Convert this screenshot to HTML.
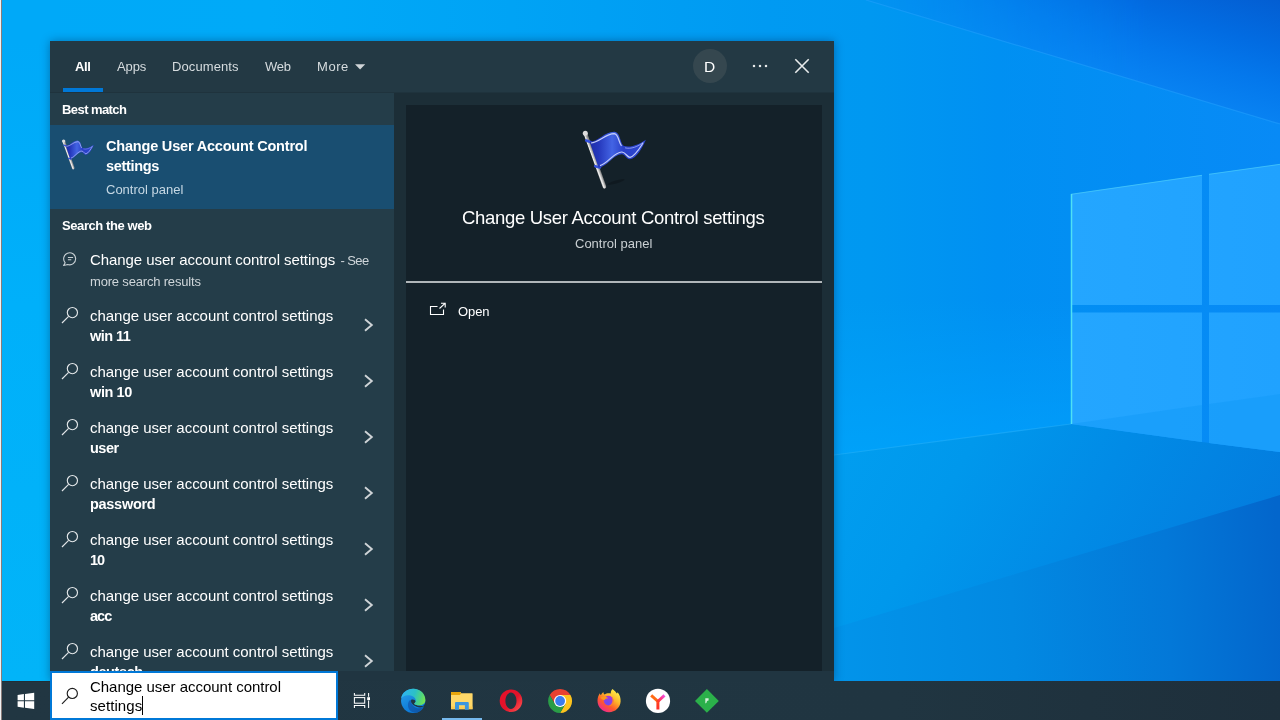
<!DOCTYPE html>
<html lang="en">
<head>
<meta charset="utf-8">
<title>Search</title>
<style>
*{box-sizing:border-box;margin:0;padding:0}
html,body{width:1280px;height:720px;overflow:hidden;background:#00a6f6}
body{font-family:"Liberation Sans","DejaVu Sans",sans-serif;color:#fff;position:relative}
#wall{position:absolute;left:0;top:0;width:1280px;height:720px}
#edge{position:absolute;left:0;top:0;width:2px;height:720px;background:linear-gradient(90deg,#f0f2f4 0,#f0f2f4 1px,#8a7c7a 1px,#8a7c7a 2px)}
#panel{position:absolute;left:50px;top:41px;width:784px;height:640px;background:#1c2e37;box-shadow:0 0 9px rgba(0,30,70,.4)}
#hdr{position:absolute;left:50px;top:41px;width:784px;height:52px;background:#233944;border-bottom:1px solid #1f333d}
#list{position:absolute;left:50px;top:93px;width:344px;height:588px;background:#243d49}
#sel{position:absolute;left:50px;top:125px;width:344px;height:84px;background:#194e71}
#tabline{position:absolute;left:63px;top:88px;width:40px;height:4px;background:#0078d7}
#card{position:absolute;left:406px;top:105px;width:416px;height:566px;background:#142129}
#divider{position:absolute;left:406px;top:281px;width:416px;height:2px;background:#b0b6b9}
#avatar{position:absolute;left:693px;top:49px;width:34px;height:34px;border-radius:50%;background:#35474f}
.t{position:absolute;white-space:nowrap;will-change:transform}
.i{position:absolute;overflow:visible}
#task{position:absolute;left:2px;top:681px;width:1278px;height:39px;background:linear-gradient(90deg,#213642 0,#203541 70%,#1e2f3b 100%)}
#tl{position:absolute;left:2px;top:681px;width:48px;height:1px;background:#212f37}
#pbot{position:absolute;left:50px;top:671px;width:784px;height:10px;background:#203541}
#sbox{position:absolute;left:50px;top:671px;width:288px;height:49px;background:#fff;border:2px solid #0078d7}
#caret{position:absolute;left:142px;top:696px;width:1px;height:19px;background:#000}
#run{position:absolute;left:442px;top:718px;width:40px;height:2px;background:#76b9ed}
</style>
</head>
<body>
<svg id="wall" viewBox="0 0 1280 720">
<defs>
<linearGradient id="gbase" gradientUnits="userSpaceOnUse" x1="0" y1="0" x2="1280" y2="0"><stop offset="0" stop-color="#00a9f8"/><stop offset="0.21" stop-color="#00aaf8"/><stop offset="0.4" stop-color="#00a3f5"/><stop offset="0.6" stop-color="#009af2"/><stop offset="0.68" stop-color="#0098f1"/><stop offset="0.78" stop-color="#0090f2"/><stop offset="1" stop-color="#088af6"/></linearGradient>
<linearGradient id="gwedge" gradientUnits="userSpaceOnUse" x1="1246" y1="114" x2="1280" y2="0"><stop offset="0" stop-color="#0882f2"/><stop offset="0.3" stop-color="#0478ec"/><stop offset="0.6" stop-color="#026ce2"/><stop offset="1" stop-color="#035ed2"/></linearGradient>
<linearGradient id="gfloor" gradientUnits="userSpaceOnUse" x1="834" y1="440" x2="1280" y2="690"><stop offset="0" stop-color="#019ef0"/><stop offset="0.24" stop-color="#0098ec"/><stop offset="0.5" stop-color="#018be6"/><stop offset="1" stop-color="#0474da"/></linearGradient>
<linearGradient id="gfloor2" gradientUnits="userSpaceOnUse" x1="834" y1="620" x2="1280" y2="600"><stop offset="0" stop-color="#0294ea"/><stop offset="0.4" stop-color="#0289e2"/><stop offset="0.75" stop-color="#0378d8"/><stop offset="1" stop-color="#0366cc"/></linearGradient>
<linearGradient id="gpane" gradientUnits="userSpaceOnUse" x1="1071" y1="0" x2="1280" y2="0"><stop offset="0" stop-color="#24a6ff"/><stop offset="1" stop-color="#20a2ff"/></linearGradient>
<linearGradient id="gglow" gradientUnits="userSpaceOnUse" x1="0" y1="300" x2="0" y2="450"><stop offset="0" stop-color="#00a8ff" stop-opacity="0"/><stop offset="1" stop-color="#00a8ff" stop-opacity=".55"/></linearGradient>
<linearGradient id="gwm" gradientUnits="userSpaceOnUse" x1="866" y1="0" x2="1150" y2="0"><stop offset="0" stop-color="#fff" stop-opacity=".15"/><stop offset="1" stop-color="#fff" stop-opacity="1"/></linearGradient>
<mask id="wm" maskUnits="userSpaceOnUse" x="860" y="0" width="420" height="130"><rect x="860" y="0" width="420" height="130" fill="url(#gwm)"/></mask>
<linearGradient id="gleft" gradientUnits="userSpaceOnUse" x1="0" y1="0" x2="0" y2="681"><stop offset="0" stop-color="#00a9f8"/><stop offset="0.06" stop-color="#00a9f8"/><stop offset="0.45" stop-color="#00b0fa"/><stop offset="1" stop-color="#02b4f8"/></linearGradient>
</defs>
<rect width="1280" height="720" fill="url(#gbase)"/>
<rect x="0" y="0" width="60" height="700" fill="url(#gleft)"/>
<polygon points="866,0 1280,124 1280,0" fill="url(#gwedge)" mask="url(#wm)"/>
<path d="M866 0L1280 124" stroke="#2aa4ff" stroke-width="1.200" opacity=".45" fill="none"/>
<polygon points="700,300 1071,300 1071,424 834,455 700,472" fill="url(#gglow)"/>
<polygon points="834,455 1071,424 1202,442 1280,452 1280,700 834,700" fill="url(#gfloor)"/>
<polygon points="834,628 1280,495 1280,700 834,700" fill="url(#gfloor2)"/>
<path d="M834 455L1071 424" stroke="#3cc0ff" stroke-width="1.200" opacity=".35" fill="none"/>
<polygon points="1071,194 1202,175 1202,305 1071,305" fill="url(#gpane)"/>
<polygon points="1209,174 1280,164 1280,305 1209,305" fill="url(#gpane)"/>
<polygon points="1071,312.500 1202,312.500 1202,442 1071,424" fill="url(#gpane)"/>
<polygon points="1209,312.500 1280,312.500 1280,452 1209,443" fill="url(#gpane)"/>
<polygon points="1071,424 1202,405 1202,442" fill="#149af8" opacity=".55"/>
<polygon points="1209,404 1280,394 1280,452 1209,443" fill="#149af8" opacity=".55"/>
<path d="M1071.500 194V424" stroke="#4fe0f4" stroke-width="1.500" fill="none"/>
<path d="M1071 194.300L1202 175.300M1209 174.300L1280 164.300" stroke="#58d8f8" stroke-width="1" opacity=".55" fill="none"/>
</svg>

<div id="edge"></div>
<div id="panel"></div>
<div id="hdr"></div>
<div id="list"></div>
<div id="sel"></div>
<div id="tabline"></div>
<div id="card"></div>
<div id="divider"></div>
<div id="avatar"></div>
<div id="pbot"></div>
<div class="t" style="left:75.00px;top:57.40px;font-size:13px;line-height:20px;color:#fff;font-weight:700;letter-spacing:-0.34px;">All</div>
<div class="t" style="left:116.90px;top:57.40px;font-size:13px;line-height:20px;color:#d6dcdf;letter-spacing:-0.11px;">Apps</div>
<div class="t" style="left:172.20px;top:57.40px;font-size:13px;line-height:20px;color:#d6dcdf;letter-spacing:0.1px;">Documents</div>
<div class="t" style="left:265.20px;top:57.40px;font-size:13px;line-height:20px;color:#d6dcdf;letter-spacing:-0.2px;">Web</div>
<div class="t" style="left:317.00px;top:57.40px;font-size:13px;line-height:20px;color:#d6dcdf;letter-spacing:0.55px;">More</div>
<div class="t" style="left:704.30px;top:56.83px;font-size:15.5px;line-height:20px;color:#fff;">D</div>
<div class="t" style="left:61.50px;top:100.20px;font-size:13px;line-height:20px;color:#fff;font-weight:700;letter-spacing:-0.57px;">Best match</div>
<div class="t" style="left:105.60px;top:135.78px;font-size:14.5px;line-height:20px;color:#fff;font-weight:700;letter-spacing:-0.19px;">Change User Account Control</div>
<div class="t" style="left:105.60px;top:155.78px;font-size:14.5px;line-height:20px;color:#fff;font-weight:700;letter-spacing:-0.32px;">settings</div>
<div class="t" style="left:105.50px;top:180.15px;font-size:13px;line-height:20px;color:#c6d8e4;">Control panel</div>
<div class="t" style="left:61.50px;top:216.20px;font-size:13px;line-height:20px;color:#fff;font-weight:700;letter-spacing:-0.41px;">Search the web</div>
<div class="t" style="left:89.50px;top:249.60px;font-size:15px;line-height:20px;color:#fff;letter-spacing:-0.07px;">Change user account control settings<span style="font-size:13px;color:#cfd6da;letter-spacing:-0.6px;margin-left:2.3px"> - See</span></div>
<div class="t" style="left:89.50px;top:272.00px;font-size:13px;line-height:20px;color:#cfd6da;letter-spacing:-0.18px;">more search results</div>
<div class="t" style="left:89.50px;top:305.60px;font-size:15px;line-height:20px;color:#fff;letter-spacing:-0.03px;">change user account control settings</div>
<div class="t" style="left:89.60px;top:325.78px;font-size:14.5px;line-height:20px;color:#fff;font-weight:700;letter-spacing:-0.55px;">win 11</div>
<div class="t" style="left:89.50px;top:361.60px;font-size:15px;line-height:20px;color:#fff;letter-spacing:-0.03px;">change user account control settings</div>
<div class="t" style="left:89.60px;top:381.78px;font-size:14.5px;line-height:20px;color:#fff;font-weight:700;letter-spacing:-0.4px;">win 10</div>
<div class="t" style="left:89.50px;top:417.60px;font-size:15px;line-height:20px;color:#fff;letter-spacing:-0.03px;">change user account control settings</div>
<div class="t" style="left:89.60px;top:437.78px;font-size:14.5px;line-height:20px;color:#fff;font-weight:700;letter-spacing:-0.5px;">user</div>
<div class="t" style="left:89.50px;top:473.60px;font-size:15px;line-height:20px;color:#fff;letter-spacing:-0.03px;">change user account control settings</div>
<div class="t" style="left:89.60px;top:493.78px;font-size:14.5px;line-height:20px;color:#fff;font-weight:700;letter-spacing:-0.29px;">password</div>
<div class="t" style="left:89.50px;top:529.60px;font-size:15px;line-height:20px;color:#fff;letter-spacing:-0.03px;">change user account control settings</div>
<div class="t" style="left:89.60px;top:549.78px;font-size:14.5px;line-height:20px;color:#fff;font-weight:700;letter-spacing:-1.0px;">10</div>
<div class="t" style="left:89.50px;top:585.60px;font-size:15px;line-height:20px;color:#fff;letter-spacing:-0.03px;">change user account control settings</div>
<div class="t" style="left:89.60px;top:605.78px;font-size:14.5px;line-height:20px;color:#fff;font-weight:700;letter-spacing:-1.0px;">acc</div>
<div class="t" style="left:89.50px;top:641.60px;font-size:15px;line-height:20px;color:#fff;letter-spacing:-0.03px;">change user account control settings</div>
<div class="t" style="left:89.60px;top:661.78px;font-size:14.5px;line-height:20px;color:#fff;font-weight:700;letter-spacing:-0.4px;">deutsch</div>
<div class="t" style="left:462.00px;top:205.59px;font-size:18.5px;line-height:24px;color:#fff;letter-spacing:-0.31px;">Change User Account Control settings</div>
<div class="t" style="left:574.50px;top:234.15px;font-size:13px;line-height:20px;color:#c9cfd2;">Control panel</div>
<div class="t" style="left:457.50px;top:302.00px;font-size:13px;line-height:20px;color:#fff;letter-spacing:-0.1px;">Open</div>
<svg class="i" style="left:0;top:0" width="1280" height="720" viewBox="0 0 1280 720">
<defs><linearGradient id="fg" x1="0" y1="0" x2="1" y2="0"><stop offset="0" stop-color="#1e2ea8"/><stop offset="0.16" stop-color="#2538bc"/><stop offset="0.4" stop-color="#4364e4"/><stop offset="0.6" stop-color="#2a40c8"/><stop offset="1" stop-color="#2e48d4"/></linearGradient>
<linearGradient id="pg" gradientUnits="userSpaceOnUse" x1="22" y1="41" x2="26" y2="39.500"><stop offset="0" stop-color="#6e6e6e"/><stop offset="0.45" stop-color="#f2f2f2"/><stop offset="1" stop-color="#8a8a8a"/></linearGradient>
<g id="flagshadow"><ellipse cx="46" cy="62" rx="9" ry="1.600" fill="#000" opacity=".22" transform="rotate(-16 46 62)"/></g>
<g id="pole1"><path d="M15.300 13.300L34.400 66.700" stroke="url(#pg)" stroke-width="3.600" stroke-linecap="round" fill="none"/>
<circle cx="15.300" cy="13.200" r="2.500" fill="#dcdcdc"/></g>
<linearGradient id="pg2" gradientUnits="userSpaceOnUse" x1="21.300" y1="41.300" x2="26.700" y2="39.300"><stop offset="0" stop-color="#6e6e6e"/><stop offset="0.45" stop-color="#f2f2f2"/><stop offset="1" stop-color="#8a8a8a"/></linearGradient>
<g id="pole2"><path d="M15.600 14L34.600 67.500" stroke="url(#pg2)" stroke-width="5.400" stroke-linecap="round" fill="none"/>
<circle cx="15.500" cy="13.600" r="3.300" fill="#dcdcdc"/></g>
<g id="cloth">
<path d="M16.200 20.600L21 22.200M25.200 46.200L30 47.500" stroke="#3450dc" stroke-width="2.600" stroke-linecap="round"/>
<path d="M19.600 21.800C28 21.500 35 11.500 44.400 11.700C51 12.500 50 24.500 54.400 26.100C61 28 70 24 75.900 19.800C72 28 67 38.500 60 39.200C56.500 39.500 55.500 35 52.200 34.300C44 33.500 37 47 28.600 47.800Z" fill="url(#fg)"/>
<path d="M21 23C29 22.500 35.500 13.800 44.200 13.700C48.500 14 48.500 22 51.500 26" stroke="#d4dcff" stroke-width="1.200" fill="none" opacity=".9"/>
<path d="M30 45.600C38 43.500 44.500 31.500 52 32C56 32.500 57 37.300 60 37.300C65 36.300 69.500 28.500 73 23" stroke="#d4dcff" stroke-width="1.200" fill="none" opacity=".9"/>
<path d="M55 27.800C61 29.500 68 26.500 73.500 22.300" stroke="#b4c0ff" stroke-width=".9" fill="none" opacity=".75"/>
</g></defs>
<g transform="translate(570 120)"><use href="#flagshadow"/><use href="#pole1"/><use href="#cloth"/></g>
<g transform="translate(55.900 134.300) scale(.5)"><use href="#pole2"/><use href="#cloth" transform="translate(0 .6) scale(1 1.030)"/></g>
<path d="M355 64.200H365.200L360.100 69.500Z" fill="#d0d5d8"/>
<rect x="752.9" y="64.900" width="2.200" height="2.200" fill="#e6e9ea"/>
<rect x="758.9" y="64.900" width="2.200" height="2.200" fill="#e6e9ea"/>
<rect x="764.9" y="64.900" width="2.200" height="2.200" fill="#e6e9ea"/>
<path d="M795.300 59.300L808.700 72.700M808.700 59.300L795.300 72.700" stroke="#e8ebec" stroke-width="1.600" fill="none"/>
<g stroke="#c9d1d5" stroke-width="1.100" fill="none" transform="translate(.6 0)"><path d="M64.600 262.800A6 6 0 1 1 67.200 264.500L63 265.500Z" stroke-linejoin="round"/><path d="M67.300 257.500H72.500M67.300 259.800H70.700"/></g>
<g stroke="#e3e7e9" stroke-width="1.150" fill="none" transform="translate(0 0)"><circle cx="72.400" cy="312.600" r="5.100"/><path d="M68.600 316.400L62 323"/></g>
<path d="M365 319.3L371.800 325.0L365 330.7" stroke="#cfd4d7" stroke-width="1.900" fill="none"/>
<g stroke="#e3e7e9" stroke-width="1.150" fill="none" transform="translate(0 56)"><circle cx="72.400" cy="312.600" r="5.100"/><path d="M68.600 316.400L62 323"/></g>
<path d="M365 375.3L371.800 381.0L365 386.7" stroke="#cfd4d7" stroke-width="1.900" fill="none"/>
<g stroke="#e3e7e9" stroke-width="1.150" fill="none" transform="translate(0 112)"><circle cx="72.400" cy="312.600" r="5.100"/><path d="M68.600 316.400L62 323"/></g>
<path d="M365 431.3L371.800 437.0L365 442.7" stroke="#cfd4d7" stroke-width="1.900" fill="none"/>
<g stroke="#e3e7e9" stroke-width="1.150" fill="none" transform="translate(0 168)"><circle cx="72.400" cy="312.600" r="5.100"/><path d="M68.600 316.400L62 323"/></g>
<path d="M365 487.3L371.800 493.0L365 498.7" stroke="#cfd4d7" stroke-width="1.900" fill="none"/>
<g stroke="#e3e7e9" stroke-width="1.150" fill="none" transform="translate(0 224)"><circle cx="72.400" cy="312.600" r="5.100"/><path d="M68.600 316.400L62 323"/></g>
<path d="M365 543.3L371.800 549.0L365 554.7" stroke="#cfd4d7" stroke-width="1.900" fill="none"/>
<g stroke="#e3e7e9" stroke-width="1.150" fill="none" transform="translate(0 280)"><circle cx="72.400" cy="312.600" r="5.100"/><path d="M68.600 316.400L62 323"/></g>
<path d="M365 599.3L371.800 605.0L365 610.7" stroke="#cfd4d7" stroke-width="1.900" fill="none"/>
<g stroke="#e3e7e9" stroke-width="1.150" fill="none" transform="translate(0 336)"><circle cx="72.400" cy="312.600" r="5.100"/><path d="M68.600 316.400L62 323"/></g>
<path d="M365 655.3L371.800 661.0L365 666.7" stroke="#cfd4d7" stroke-width="1.900" fill="none"/>
<g stroke="#fff" stroke-width="1.100" fill="none"><path d="M437.500 306.500H430.500V314.500H443.500V309.500"/><path d="M439.500 308.500L445 303.300M441 303.300H445.200V307.500"/></g>
</svg>

<div id="task"></div>
<div id="tl"></div>
<div id="sbox"></div>
<svg class="i" style="left:0;top:0" width="1280" height="720" viewBox="0 0 1280 720">
<defs>
<linearGradient id="eg1" gradientUnits="userSpaceOnUse" x1="200" y1="230" x2="420" y2="620"><stop offset="0" stop-color="#2499e6"/><stop offset="0.5" stop-color="#1585dc"/><stop offset="1" stop-color="#0a78da"/></linearGradient>
<linearGradient id="eg2" gradientUnits="userSpaceOnUse" x1="190" y1="200" x2="680" y2="360"><stop offset="0" stop-color="#2eb4f2"/><stop offset="0.5" stop-color="#2cc0c6"/><stop offset="0.8" stop-color="#52d67a"/><stop offset="1" stop-color="#7be44e"/></linearGradient>
<linearGradient id="eg3" gradientUnits="userSpaceOnUse" x1="340" y1="380" x2="560" y2="600"><stop offset="0" stop-color="#1264bc"/><stop offset="1" stop-color="#0c58aa"/></linearGradient>
<linearGradient id="og" gradientUnits="userSpaceOnUse" x1="501" y1="692" x2="521" y2="710"><stop offset="0" stop-color="#e8102a"/><stop offset="0.55" stop-color="#e0142a"/><stop offset="1" stop-color="#ff5050"/></linearGradient>
<linearGradient id="fxg" gradientUnits="userSpaceOnUse" x1="617" y1="691" x2="602" y2="712"><stop offset="0" stop-color="#fff04a"/><stop offset="0.35" stop-color="#ffb52a"/><stop offset="0.65" stop-color="#ff5a2a"/><stop offset="1" stop-color="#ee1fa0"/></linearGradient>
<radialGradient id="fxp" gradientUnits="userSpaceOnUse" cx="607.500" cy="703" r="6.500"><stop offset="0" stop-color="#6a4cf0"/><stop offset="1" stop-color="#a838d8"/></radialGradient>
<linearGradient id="yg" gradientUnits="userSpaceOnUse" x1="657.900" y1="701" x2="664.500" y2="695.300"><stop offset="0" stop-color="#ff3a2a"/><stop offset="0.5" stop-color="#ff3a8a"/><stop offset="1" stop-color="#f050e8"/></linearGradient>
<linearGradient id="yg2" gradientUnits="userSpaceOnUse" x1="657.900" y1="700" x2="657.900" y2="709.500"><stop offset="0" stop-color="#ff4a1a"/><stop offset="1" stop-color="#ff2a2a"/></linearGradient>
<clipPath id="cc"><circle cx="560.100" cy="701" r="12"/></clipPath>
</defs>
<g fill="#fff"><path d="M17.600 695L23.900 694.100V700.200H17.600Z"/><path d="M25 693.950L34.200 692.700V700.200H25Z"/><path d="M17.600 701.300H23.900V707.700L17.600 706.800Z"/><path d="M25 701.300H34.200V709.100L25 707.850Z"/></g>
<g stroke="#1e1e1e" stroke-width="1.150" fill="none"><circle cx="72.300" cy="693.400" r="5.100"/><path d="M68.600 697.200L62 703.800"/></g>
<g stroke="#fff" stroke-width="1.050" fill="none"><rect x="354.400" y="697.600" width="10.300" height="5.600"/><path d="M354.400 692.900V695.300H364.700V692.900"/><path d="M354.400 707.900V705.500H364.700V707.900"/><path d="M368.600 692.900V696.800M368.600 700.500V707.900"/></g><rect x="367.200" y="697.200" width="2.800" height="2.900" fill="#fff"/>
<g transform="translate(393 684) scale(0.047214)"><circle cx="427" cy="357" r="257" fill="url(#eg1)"/><path d="M330 380C295 450 325 560 420 600C520 632 625 565 648 478C600 522 520 530 450 480C400 440 380 400 385 338C352 338 336 358 330 380Z" fill="url(#eg3)"/><path d="M385 335C420 318 472 330 482 370C474 398 452 408 446 420C470 450 560 470 645 468C622 502 560 502 500 482C420 452 368 402 385 335Z" fill="#203541"/><path d="M640 462L700 410L700 560C680 540 660 500 648 480Z" fill="#203541"/><path d="M172 305C188 182 300 100 430 100C580 100 686 210 686 340C686 420 620 452 560 452C500 452 450 432 448 412C470 392 492 372 482 340C470 280 400 240 320 240C250 240 198 272 172 305Z" fill="url(#eg2)"/></g>
<g><path d="M451 692.500Q451 692 451.500 692H460.300L461.300 693.200H472.100Q472.600 693.200 472.600 693.700V709.200H451Z" fill="#ffd868"/><path d="M451 692.500Q451 692 451.500 692H460.300L461.300 693.200L459.800 694.900H451Z" fill="#e8a60c"/><path d="M451 706.500H472.600V709.200H451Z" fill="#fbc84a" opacity=".7"/><path d="M455 709.700V702.900Q455 701.900 456 701.900H467.800Q468.800 701.900 468.800 702.900V709.700H464.900V705.300H459V709.700Z" fill="#3b96de"/></g>
<path fill-rule="evenodd" d="M511 689.450A11.300 11.300 0 1 0 511 712.050A11.300 11.300 0 1 0 511 689.450ZM511 692.500C514.100 692.500 516.500 696.200 516.500 700.750C516.500 705.300 514.100 709 511 709C507.900 709 505.400 705.300 505.400 700.750C505.400 696.200 507.900 692.500 511 692.500Z" fill="url(#og)"/>
<path d="M549.71 695.00A12.0 12.0 0 0 1 570.49 695.00L560.10 695.00L554.90 704.00Z" fill="#e84131"/><path d="M570.49 695.00A12.0 12.0 0 0 1 560.10 713.00L565.30 704.00L560.10 695.00Z" fill="#fcc31e"/><path d="M560.10 713.00A12.0 12.0 0 0 1 549.71 695.00L554.90 704.00L565.30 704.00Z" fill="#2a9c47"/><circle cx="560.1" cy="701.0" r="6.100" fill="#fff"/><circle cx="560.1" cy="701.0" r="4.900" fill="#3b7cf0"/>
<g><path d="M612.500 689C614.500 690.500 616 692 616.800 693.600C617.300 693.300 617.500 692.800 617.600 692.300C619.800 694.800 620.800 698 620.600 701.500C620.200 707.500 615.200 712.200 609 712.200C602.600 712.200 597.500 707.200 597.500 700.800C597.500 698 598.300 695.300 599.900 693.200C600 694 600.400 694.800 601 695.300C601.400 694 602.300 692.800 603.400 692C603.400 693 603.800 694 604.500 694.600C606 693.500 608.500 693 610.800 693.600C610.600 691.800 611.300 690.200 612.500 689Z" fill="url(#fxg)"/><circle cx="608.500" cy="700.600" r="4.800" fill="url(#fxp)"/><path d="M600.500 697.500C603 696.300 606 696.600 608.200 698.200C606.500 698.300 605 699 604.300 700.300C602.800 699.800 601.300 698.800 600.500 697.500Z" fill="#ff9a1e"/><path d="M611.500 696.500C613.500 697.800 614.300 700.300 613.600 702.600C612.800 705 610.600 706.500 608 706.400C610.300 705.600 612 703.600 612.300 701.200C612.500 699.400 612.200 697.800 611.500 696.500Z" fill="#ff8a2a" opacity=".85"/></g>
<circle cx="658" cy="700.900" r="12.100" fill="#fff"/><g fill="none" stroke-width="3" stroke-linecap="butt"><path d="M657.900 700.200V709.500" stroke="url(#yg2)"/><path d="M658.600 702L651.200 695.300" stroke="#ff6a14"/><path d="M657.200 702L664.500 695.300" stroke="url(#yg)"/></g>
<path d="M706.900 689L718.800 700.900L706.900 712.800L695 700.900Z" fill="#2bb04a"/><path d="M705.300 698.300H708.600V700.500L707 700.900L706.500 702.800L705.300 703.600Z" fill="#d4efd9"/>
</svg>

<div id="run"></div>
<div class="t" style="left:89.50px;top:676.60px;font-size:15px;line-height:20px;color:#000;letter-spacing:-0.03px;">Change user account control</div>
<div class="t" style="left:89.50px;top:696.20px;font-size:15px;line-height:20px;color:#000;letter-spacing:0.07px;">settings</div>
<div id="caret"></div>
</body>
</html>
